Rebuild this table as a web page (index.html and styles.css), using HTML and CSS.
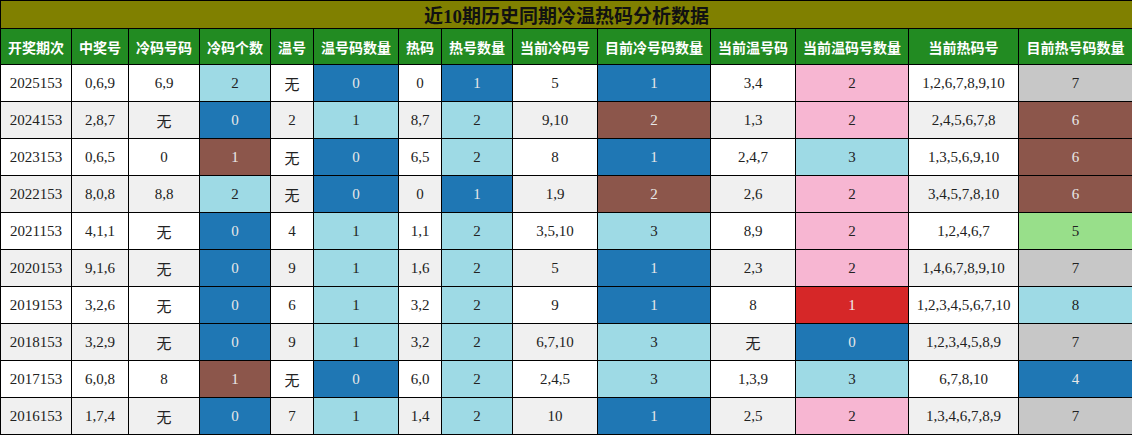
FILE: index.html
```html
<!DOCTYPE html>
<html lang="zh">
<head>
<meta charset="utf-8">
<title>近10期历史同期冷温热码分析数据</title>
<link rel="stylesheet" href="styles.css">
</head>
<body>
<table class="grid">
  <colgroup>
    <col class="w71"><col class="w57"><col class="w71"><col class="w71"><col class="w43"><col class="w85"><col class="w43"><col class="w71"><col class="w85"><col class="w113"><col class="w85"><col class="w113"><col class="w110"><col class="w114">
  </colgroup>
  <thead>
    <tr class="title-row"><th colspan="14" class="title">近10期历史同期冷温热码分析数据</th></tr>
    <tr class="head-row">
      <th>开奖期次</th><th>中奖号</th><th>冷码号码</th><th>冷码个数</th><th>温号</th><th>温号码数量</th><th>热码</th><th>热号数量</th><th>当前冷码号</th><th>目前冷号码数量</th><th>当前温号码</th><th>当前温码号数量</th><th>当前热码号</th><th>目前热号码数量</th>
    </tr>
  </thead>
  <tbody>
    <tr><td>2025153</td><td>0,6,9</td><td>6,9</td><td class="lb">2</td><td class="none">无</td><td class="b">0</td><td>0</td><td class="b">1</td><td>5</td><td class="b">1</td><td>3,4</td><td class="p">2</td><td>1,2,6,7,8,9,10</td><td class="g">7</td></tr>
    <tr><td>2024153</td><td>2,8,7</td><td class="none">无</td><td class="b">0</td><td>2</td><td class="lb">1</td><td>8,7</td><td class="lb">2</td><td>9,10</td><td class="br">2</td><td>1,3</td><td class="p">2</td><td>2,4,5,6,7,8</td><td class="br">6</td></tr>
    <tr><td>2023153</td><td>0,6,5</td><td>0</td><td class="br">1</td><td class="none">无</td><td class="b">0</td><td>6,5</td><td class="lb">2</td><td>8</td><td class="b">1</td><td>2,4,7</td><td class="lb">3</td><td>1,3,5,6,9,10</td><td class="br">6</td></tr>
    <tr><td>2022153</td><td>8,0,8</td><td>8,8</td><td class="lb">2</td><td class="none">无</td><td class="b">0</td><td>0</td><td class="b">1</td><td>1,9</td><td class="br">2</td><td>2,6</td><td class="p">2</td><td>3,4,5,7,8,10</td><td class="br">6</td></tr>
    <tr><td>2021153</td><td>4,1,1</td><td class="none">无</td><td class="b">0</td><td>4</td><td class="lb">1</td><td>1,1</td><td class="lb">2</td><td>3,5,10</td><td class="lb">3</td><td>8,9</td><td class="p">2</td><td>1,2,4,6,7</td><td class="lg">5</td></tr>
    <tr><td>2020153</td><td>9,1,6</td><td class="none">无</td><td class="b">0</td><td>9</td><td class="lb">1</td><td>1,6</td><td class="lb">2</td><td>5</td><td class="b">1</td><td>2,3</td><td class="p">2</td><td>1,4,6,7,8,9,10</td><td class="g">7</td></tr>
    <tr><td>2019153</td><td>3,2,6</td><td class="none">无</td><td class="b">0</td><td>6</td><td class="lb">1</td><td>3,2</td><td class="lb">2</td><td>9</td><td class="b">1</td><td>8</td><td class="r">1</td><td>1,2,3,4,5,6,7,10</td><td class="lb">8</td></tr>
    <tr><td>2018153</td><td>3,2,9</td><td class="none">无</td><td class="b">0</td><td>9</td><td class="lb">1</td><td>3,2</td><td class="lb">2</td><td>6,7,10</td><td class="lb">3</td><td class="none">无</td><td class="b">0</td><td>1,2,3,4,5,8,9</td><td class="g">7</td></tr>
    <tr><td>2017153</td><td>6,0,8</td><td>8</td><td class="br">1</td><td class="none">无</td><td class="b">0</td><td>6,0</td><td class="lb">2</td><td>2,4,5</td><td class="lb">3</td><td>1,3,9</td><td class="lb">3</td><td>6,7,8,10</td><td class="b">4</td></tr>
    <tr><td>2016153</td><td>1,7,4</td><td class="none">无</td><td class="b">0</td><td>7</td><td class="lb">1</td><td>1,4</td><td class="lb">2</td><td>10</td><td class="b">1</td><td>2,5</td><td class="p">2</td><td>1,3,4,6,7,8,9</td><td class="g">7</td></tr>
  </tbody>
</table>
</body>
</html>
```
FILE: styles.css
```css
html, body {
  margin: 0;
  padding: 0;
  background: #ffffff;
}
.grid {
  border-collapse: collapse;
  table-layout: fixed;
  width: 1132px;
  font-family: "Liberation Serif", "Noto Sans CJK SC", serif;
  font-size: 15px;
  color: #222;
}
.w43 { width: 43px; }
.w57 { width: 57px; }
.w71 { width: 71px; }
.w85 { width: 85px; }
.w110 { width: 110px; }
.w113 { width: 113px; }
.w114 { width: 114px; }
.grid th, .grid td {
  border: 1px solid #000;
  padding: 0;
  text-align: center;
  vertical-align: middle;
  overflow: hidden;
  white-space: nowrap;
}
.title-row { height: 28px; }
.title {
  background: #808000;
  color: #111;
  font-family: "Liberation Serif", "Noto Sans CJK SC", serif;
  font-size: 19px;
  font-weight: bold;
}
.head-row { height: 36px; }
.head-row th {
  background: #228b22;
  color: #fff;
  font-family: "Noto Sans CJK SC", sans-serif;
  font-size: 14px;
  font-weight: bold;
}
.grid tbody tr { height: 37px; background: #ffffff; }
.grid tbody tr:nth-child(even) { background: #f0f0f0; }
.grid td.none {
  font-family: "Noto Sans CJK SC", sans-serif;
  font-size: 15px;
}
.grid td.lb { background: #9edae5; }
.grid td.b { background: #1f77b4; color: #e8e8e8; }
.grid td.br { background: #8c564b; color: #e8e8e8; }
.grid td.p { background: #f7b6d2; }
.grid td.g { background: #c7c7c7; }
.grid td.lg { background: #98df8a; }
.grid td.r { background: #d62728; color: #eeeeee; }
```
